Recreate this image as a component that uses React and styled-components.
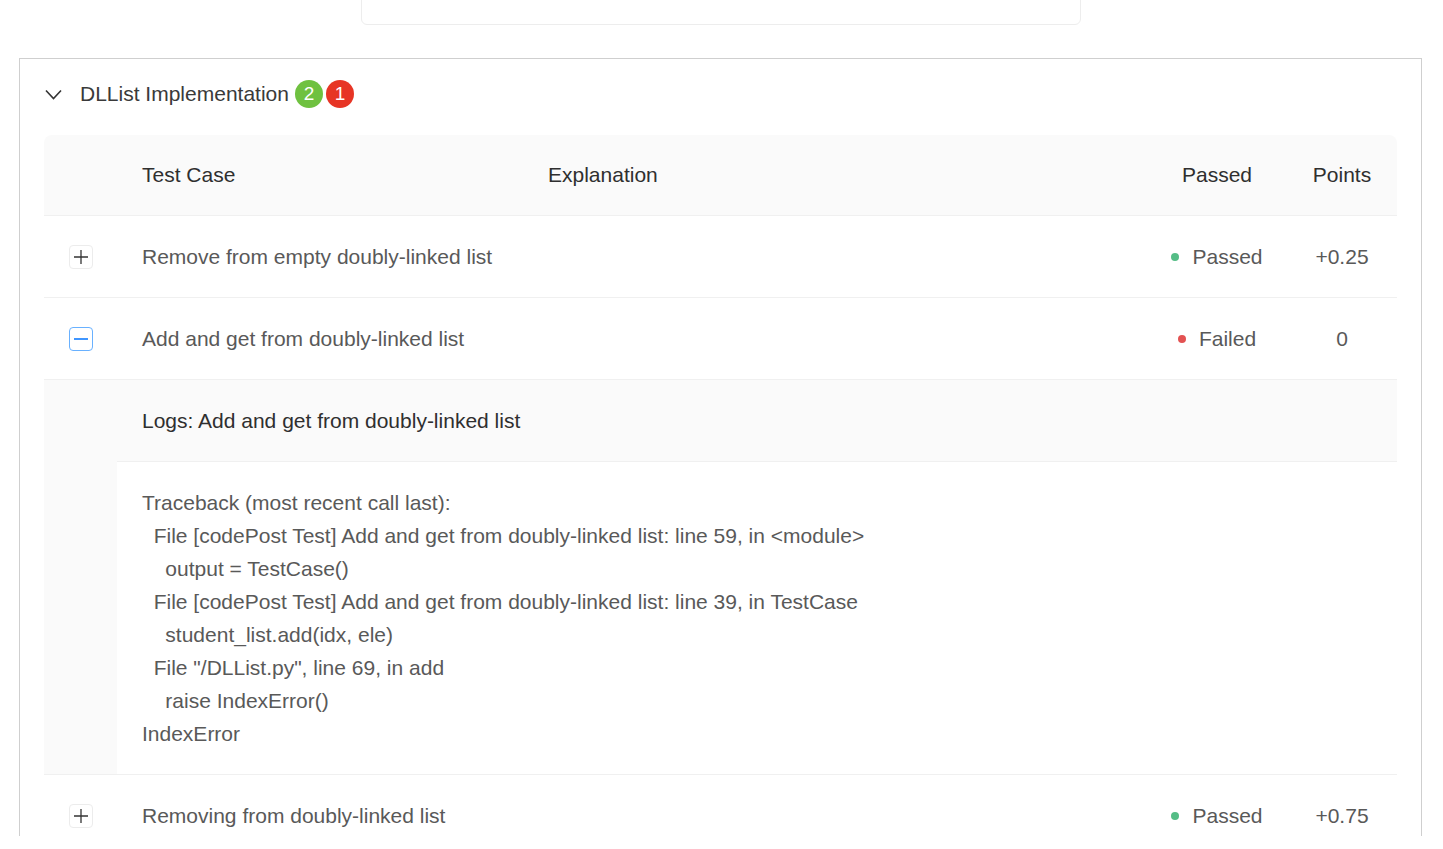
import React from 'react'
import styled, { createGlobalStyle } from 'styled-components'

const GlobalStyle = createGlobalStyle`
  body {
    margin: 0;
    background: #fff;
    font-family: "Liberation Sans", Arial, sans-serif;
  }
`

const tests = [
  { name: 'Remove from empty doubly-linked list', passed: true, points: '+0.25' },
  {
    name: 'Add and get from doubly-linked list',
    passed: false,
    points: '0',
    open: true,
    log: `Traceback (most recent call last):
  File [codePost Test] Add and get from doubly-linked list: line 59, in <module>
    output = TestCase()
  File [codePost Test] Add and get from doubly-linked list: line 39, in TestCase
    student_list.add(idx, ele)
  File "/DLList.py", line 69, in add
    raise IndexError()
IndexError`,
  },
  { name: 'Removing from doubly-linked list', passed: true, points: '+0.75' },
]

const Chevron = () => (
  <svg width="17" height="11" viewBox="0 0 17 11" fill="none">
    <path d="M1 1.5 L8.5 9.5 L16 1.5" stroke="#333" strokeWidth="1.6" />
  </svg>
)

const ExpandIcon = ({ open }) => (
  <ExpandButton $open={open}>
    <svg width="24" height="24" viewBox="0 0 24 24">
      <path d="M5 12 H19" stroke={open ? '#4096ff' : '#333'} strokeWidth={open ? 2.2 : 1.3} />
      {!open && <path d="M12 5 V19" stroke="#333" strokeWidth="1.3" />}
    </svg>
  </ExpandButton>
)

const App = () => {
  return (
    <Page>
      <GlobalStyle />
      <TopCard />
      <Panel>
        <PanelHeader>
          <Chevron />
          <Title>DLList Implementation</Title>
          <Badges>
            <Count $color="#6fc140">2</Count>
            <Count $color="#e73525">1</Count>
          </Badges>
        </PanelHeader>
        <PanelBody>
          <Table>
            <HeadRow>
              <Cell />
              <Cell $pad>Test Case</Cell>
              <Cell $pad>Explanation</Cell>
              <Cell $center>Passed</Cell>
              <Cell $center>Points</Cell>
            </HeadRow>
            {tests.map((t) => (
              <React.Fragment key={t.name}>
                <Row>
                  <Cell $center>
                    <ExpandIcon open={t.open} />
                  </Cell>
                  <Cell $pad>{t.name}</Cell>
                  <Cell />
                  <Cell $center>
                    <Status>
                      <Dot $ok={t.passed} />
                      {t.passed ? 'Passed' : 'Failed'}
                    </Status>
                  </Cell>
                  <Cell $center>{t.points}</Cell>
                </Row>
                {t.open && (
                  <ExpandedRow>
                    <Gutter />
                    <Logs>
                      <LogsHead>Logs: {t.name}</LogsHead>
                      <LogsBody>{t.log}</LogsBody>
                    </Logs>
                  </ExpandedRow>
                )}
              </React.Fragment>
            ))}
          </Table>
        </PanelBody>
      </Panel>
    </Page>
  )
}

const Page = styled.div`
  height: 836px;
  overflow: hidden;
`

const TopCard = styled.div`
  width: 718px;
  height: 44px;
  margin: -21px 0 0 361px;
  border: 1px solid #ededed;
  border-radius: 6px;
`

const Panel = styled.section`
  margin: 33px 21px 0 19px;
  border: 1px solid #cfcfcf;
`

const PanelHeader = styled.div`
  display: flex;
  align-items: center;
  height: 70px;
  padding: 0 25px;
`

const Title = styled.span`
  margin-left: 18px;
  font-size: 21px;
  color: #3a3a3a;
`

const Badges = styled.span`
  display: flex;
  gap: 3px;
  margin-left: 6px;
`

const Count = styled.span`
  width: 28px;
  height: 28px;
  border-radius: 50%;
  background: ${(p) => p.$color};
  color: #fff;
  font-size: 19px;
  display: flex;
  align-items: center;
  justify-content: center;
`

const PanelBody = styled.div`
  padding: 6px 24px 0;
`

const Table = styled.div`
  font-size: 21px;
  color: #595959;
`

const gridCols = '73px 406px 1fr 140px 110px'

const HeadRow = styled.div`
  display: grid;
  grid-template-columns: ${gridCols};
  height: 80px;
  background: #fafafa;
  border-bottom: 1px solid #f0f0f0;
  border-radius: 8px 8px 0 0;
  color: #2f2f2f;
`

const Row = styled.div`
  display: grid;
  grid-template-columns: ${gridCols};
  height: 81px;
  border-bottom: 1px solid #f0f0f0;
`

const Cell = styled.div`
  display: flex;
  align-items: center;
  justify-content: ${(p) => (p.$center ? 'center' : 'flex-start')};
  padding-left: ${(p) => (p.$pad ? '25px' : '0')};
  white-space: nowrap;
`

const ExpandButton = styled.span`
  display: flex;
  width: 24px;
  height: 24px;
  box-sizing: border-box;
  border: 1px solid ${(p) => (p.$open ? '#69b1ff' : '#ececec')};
  border-radius: 4px;
  align-items: center;
  justify-content: center;
  overflow: hidden;
  svg {
    flex: none;
  }
`

const Status = styled.span`
  display: flex;
  align-items: center;
  gap: 13px;
`

const Dot = styled.span`
  width: 8px;
  height: 8px;
  border-radius: 50%;
  background: ${(p) => (p.$ok ? '#55bd86' : '#e35252')};
`

const ExpandedRow = styled.div`
  display: grid;
  grid-template-columns: 73px 1fr;
  border-bottom: 1px solid #f0f0f0;
`

const Gutter = styled.div`
  background: #fafafa;
`

const Logs = styled.div`
  display: flex;
  flex-direction: column;
`

const LogsHead = styled.div`
  display: flex;
  align-items: center;
  height: 81px;
  padding-left: 25px;
  background: #fafafa;
  border-bottom: 1px solid #f0f0f0;
  color: #2f2f2f;
`

const LogsBody = styled.pre`
  margin: 0;
  padding: 24px 25px 24px;
  font-family: inherit;
  font-size: 21px;
  line-height: 33px;
  color: #595959;
  white-space: pre;
`

export default App
